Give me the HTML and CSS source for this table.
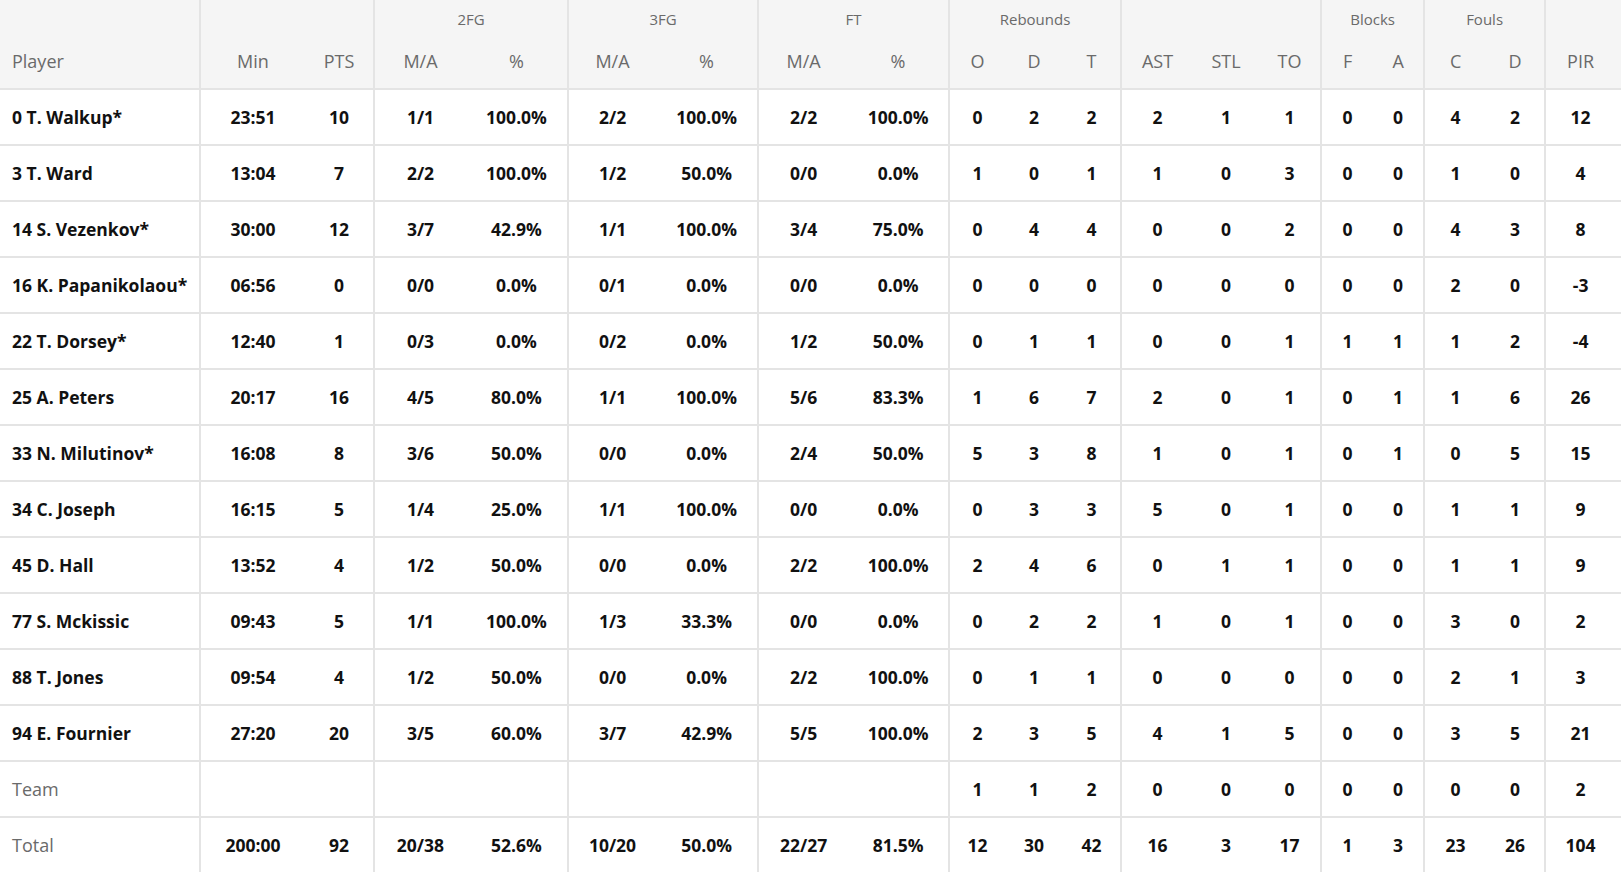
FILE: index.html
```html
<!DOCTYPE html>
<html lang="en">
<head>
<meta charset="utf-8">
<title>Box score</title>
<link rel="stylesheet" href="styles.css">
</head>
<body>
<table class="box">
  <colgroup>
    <col class="w200"><col class="w105"><col class="w69">
    <col class="w92"><col class="w102">
    <col class="w88"><col class="w102">
    <col class="w90"><col class="w101">
    <col class="w56"><col class="w58"><col class="w58">
    <col class="w72"><col class="w66"><col class="w62">
    <col class="w52"><col class="w51">
    <col class="w62"><col class="w59">
    <col class="w76">
  </colgroup>
  <thead>
    <tr class="grp">
      <th></th>
      <th colspan="2" class="gs"></th>
      <th colspan="2" class="gs">2FG</th>
      <th colspan="2" class="gs">3FG</th>
      <th colspan="2" class="gs">FT</th>
      <th colspan="3" class="gs">Rebounds</th>
      <th colspan="3" class="gs"></th>
      <th colspan="2" class="gs">Blocks</th>
      <th colspan="2" class="gs">Fouls</th>
      <th class="gs"></th>
    </tr>
    <tr class="sub">
      <th class="name">Player</th>
      <th class="gs">Min</th><th>PTS</th>
      <th class="gs">M/A</th><th>%</th>
      <th class="gs">M/A</th><th>%</th>
      <th class="gs">M/A</th><th>%</th>
      <th class="gs">O</th><th>D</th><th>T</th>
      <th class="gs">AST</th><th>STL</th><th>TO</th>
      <th class="gs">F</th><th>A</th>
      <th class="gs">C</th><th>D</th>
      <th class="gs pir">PIR</th>
    </tr>
  </thead>
  <tbody>
    <tr><td class="name">0 T. Walkup*</td><td class="gs">23:51</td><td>10</td><td class="gs">1/1</td><td>100.0%</td><td class="gs">2/2</td><td>100.0%</td><td class="gs">2/2</td><td>100.0%</td><td class="gs">0</td><td>2</td><td>2</td><td class="gs">2</td><td>1</td><td>1</td><td class="gs">0</td><td>0</td><td class="gs">4</td><td>2</td><td class="gs pir">12</td></tr>
    <tr><td class="name">3 T. Ward</td><td class="gs">13:04</td><td>7</td><td class="gs">2/2</td><td>100.0%</td><td class="gs">1/2</td><td>50.0%</td><td class="gs">0/0</td><td>0.0%</td><td class="gs">1</td><td>0</td><td>1</td><td class="gs">1</td><td>0</td><td>3</td><td class="gs">0</td><td>0</td><td class="gs">1</td><td>0</td><td class="gs pir">4</td></tr>
    <tr><td class="name">14 S. Vezenkov*</td><td class="gs">30:00</td><td>12</td><td class="gs">3/7</td><td>42.9%</td><td class="gs">1/1</td><td>100.0%</td><td class="gs">3/4</td><td>75.0%</td><td class="gs">0</td><td>4</td><td>4</td><td class="gs">0</td><td>0</td><td>2</td><td class="gs">0</td><td>0</td><td class="gs">4</td><td>3</td><td class="gs pir">8</td></tr>
    <tr><td class="name">16 K. Papanikolaou*</td><td class="gs">06:56</td><td>0</td><td class="gs">0/0</td><td>0.0%</td><td class="gs">0/1</td><td>0.0%</td><td class="gs">0/0</td><td>0.0%</td><td class="gs">0</td><td>0</td><td>0</td><td class="gs">0</td><td>0</td><td>0</td><td class="gs">0</td><td>0</td><td class="gs">2</td><td>0</td><td class="gs pir">-3</td></tr>
    <tr><td class="name">22 T. Dorsey*</td><td class="gs">12:40</td><td>1</td><td class="gs">0/3</td><td>0.0%</td><td class="gs">0/2</td><td>0.0%</td><td class="gs">1/2</td><td>50.0%</td><td class="gs">0</td><td>1</td><td>1</td><td class="gs">0</td><td>0</td><td>1</td><td class="gs">1</td><td>1</td><td class="gs">1</td><td>2</td><td class="gs pir">-4</td></tr>
    <tr><td class="name">25 A. Peters</td><td class="gs">20:17</td><td>16</td><td class="gs">4/5</td><td>80.0%</td><td class="gs">1/1</td><td>100.0%</td><td class="gs">5/6</td><td>83.3%</td><td class="gs">1</td><td>6</td><td>7</td><td class="gs">2</td><td>0</td><td>1</td><td class="gs">0</td><td>1</td><td class="gs">1</td><td>6</td><td class="gs pir">26</td></tr>
    <tr><td class="name">33 N. Milutinov*</td><td class="gs">16:08</td><td>8</td><td class="gs">3/6</td><td>50.0%</td><td class="gs">0/0</td><td>0.0%</td><td class="gs">2/4</td><td>50.0%</td><td class="gs">5</td><td>3</td><td>8</td><td class="gs">1</td><td>0</td><td>1</td><td class="gs">0</td><td>1</td><td class="gs">0</td><td>5</td><td class="gs pir">15</td></tr>
    <tr><td class="name">34 C. Joseph</td><td class="gs">16:15</td><td>5</td><td class="gs">1/4</td><td>25.0%</td><td class="gs">1/1</td><td>100.0%</td><td class="gs">0/0</td><td>0.0%</td><td class="gs">0</td><td>3</td><td>3</td><td class="gs">5</td><td>0</td><td>1</td><td class="gs">0</td><td>0</td><td class="gs">1</td><td>1</td><td class="gs pir">9</td></tr>
    <tr><td class="name">45 D. Hall</td><td class="gs">13:52</td><td>4</td><td class="gs">1/2</td><td>50.0%</td><td class="gs">0/0</td><td>0.0%</td><td class="gs">2/2</td><td>100.0%</td><td class="gs">2</td><td>4</td><td>6</td><td class="gs">0</td><td>1</td><td>1</td><td class="gs">0</td><td>0</td><td class="gs">1</td><td>1</td><td class="gs pir">9</td></tr>
    <tr><td class="name">77 S. Mckissic</td><td class="gs">09:43</td><td>5</td><td class="gs">1/1</td><td>100.0%</td><td class="gs">1/3</td><td>33.3%</td><td class="gs">0/0</td><td>0.0%</td><td class="gs">0</td><td>2</td><td>2</td><td class="gs">1</td><td>0</td><td>1</td><td class="gs">0</td><td>0</td><td class="gs">3</td><td>0</td><td class="gs pir">2</td></tr>
    <tr><td class="name">88 T. Jones</td><td class="gs">09:54</td><td>4</td><td class="gs">1/2</td><td>50.0%</td><td class="gs">0/0</td><td>0.0%</td><td class="gs">2/2</td><td>100.0%</td><td class="gs">0</td><td>1</td><td>1</td><td class="gs">0</td><td>0</td><td>0</td><td class="gs">0</td><td>0</td><td class="gs">2</td><td>1</td><td class="gs pir">3</td></tr>
    <tr><td class="name">94 E. Fournier</td><td class="gs">27:20</td><td>20</td><td class="gs">3/5</td><td>60.0%</td><td class="gs">3/7</td><td>42.9%</td><td class="gs">5/5</td><td>100.0%</td><td class="gs">2</td><td>3</td><td>5</td><td class="gs">4</td><td>1</td><td>5</td><td class="gs">0</td><td>0</td><td class="gs">3</td><td>5</td><td class="gs pir">21</td></tr>
    <tr><td class="name label">Team</td><td class="gs"></td><td></td><td class="gs"></td><td></td><td class="gs"></td><td></td><td class="gs"></td><td></td><td class="gs">1</td><td>1</td><td>2</td><td class="gs">0</td><td>0</td><td>0</td><td class="gs">0</td><td>0</td><td class="gs">0</td><td>0</td><td class="gs pir">2</td></tr>
    <tr><td class="name label">Total</td><td class="gs">200:00</td><td>92</td><td class="gs">20/38</td><td>52.6%</td><td class="gs">10/20</td><td>50.0%</td><td class="gs">22/27</td><td>81.5%</td><td class="gs">12</td><td>30</td><td>42</td><td class="gs">16</td><td>3</td><td>17</td><td class="gs">1</td><td>3</td><td class="gs">23</td><td>26</td><td class="gs pir">104</td></tr>
  </tbody>
</table>
</body>
</html>
```

FILE: styles.css
```css
html, body {
  margin: 0;
  padding: 0;
  background: #ffffff;
}

body {
  font-family: "Open Sans", "Noto Sans", "Liberation Sans", sans-serif;
  color: #111111;
  overflow: hidden;
}

.box {
  width: 1621px;
  table-layout: fixed;
  border-collapse: collapse;
  border-spacing: 0;
}

.w200 { width: 200px; }
.w105 { width: 105px; }
.w69 { width: 69px; }
.w92 { width: 92px; }
.w102 { width: 102px; }
.w88 { width: 88px; }
.w90 { width: 90px; }
.w101 { width: 101px; }
.w56 { width: 56px; }
.w58 { width: 58px; }
.w72 { width: 72px; }
.w66 { width: 66px; }
.w62 { width: 62px; }
.w52 { width: 52px; }
.w51 { width: 51px; }
.w59 { width: 59px; }
.w76 { width: 76px; }

.box thead {
  background: #f5f5f5;
}

.box th {
  font-weight: 400;
  color: #6a6a6a;
  text-align: center;
  padding: 0;
  white-space: nowrap;
}

.grp th {
  height: 36px;
  font-size: 15px;
  vertical-align: middle;
  padding-top: 1px;
}

.sub th {
  height: 47px;
  font-size: 18px;
  vertical-align: middle;
  padding-bottom: 4px;
  border-bottom: 2px solid #e4e4e4;
}

.box td {
  height: 54px;
  padding: 0;
  font-size: 17.5px;
  font-weight: 700;
  text-align: center;
  vertical-align: middle;
  white-space: nowrap;
  border-top: 2px solid #e4e4e4;
}

.box .name {
  text-align: left;
  padding-left: 12px;
}

.box td.label {
  font-weight: 400;
  color: #6a6a6a;
  font-size: 18px;
}

.box .gs {
  border-left: 2px solid #e4e4e4;
}

.box .pir {
  padding-right: 6px;
}
```
